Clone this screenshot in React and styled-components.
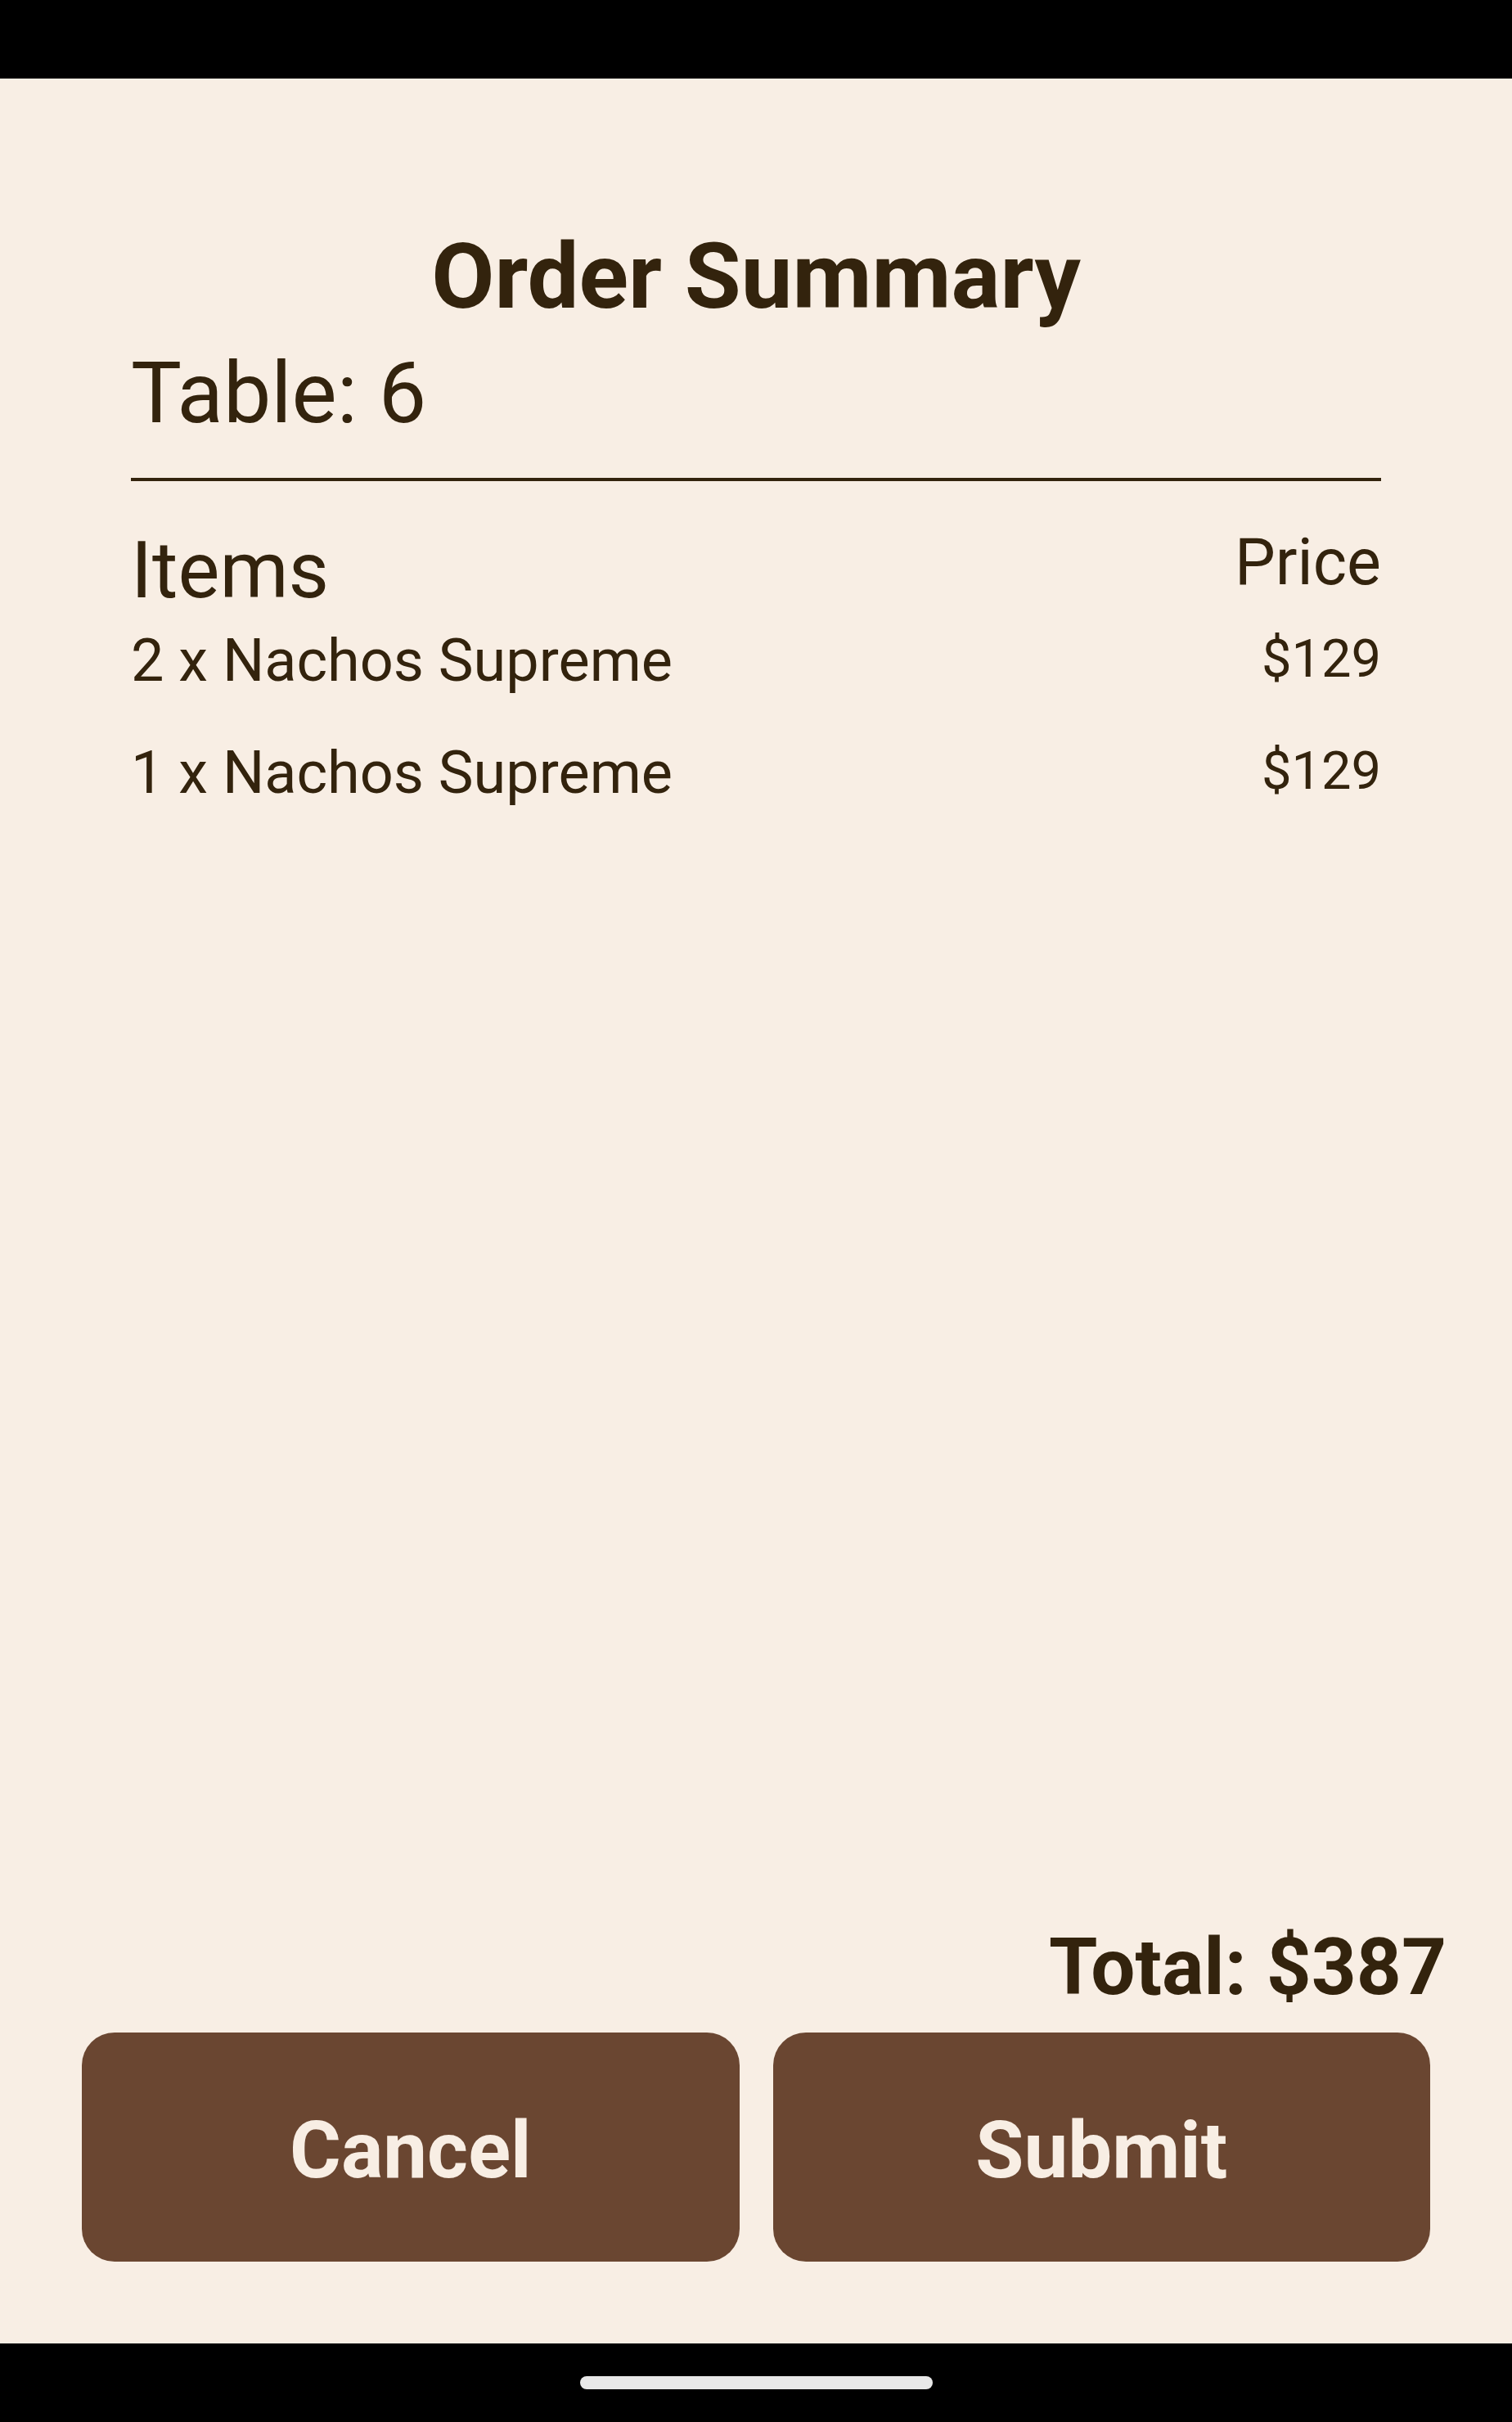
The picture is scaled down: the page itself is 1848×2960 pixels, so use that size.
import React from 'react'
import styled, { createGlobalStyle } from 'styled-components'

const BACKGROUND_COLOR = '#F8EEE4'
const TEXT_COLOR = '#33230D'
const BUTTON_COLOR = '#6A4631'

const GlobalStyle = createGlobalStyle`
  html, body {
    margin: 0;
    padding: 0;
    background: #000;
  }
  body {
    font-family: Roboto, "Noto Sans", sans-serif;
  }
`

const Screen = styled.div`
  display: flex;
  flex-direction: column;
  height: 2960px;
  width: 1848px;
`

const StatusBar = styled.div`
  background: #000;
  height: 96px;
`

const Content = styled.main`
  background: ${BACKGROUND_COLOR};
  color: ${TEXT_COLOR};
  display: flex;
  flex: 1;
  flex-direction: column;
  padding: 176px 0 100px;
`

const Title = styled.h1`
  font-size: 112px;
  font-weight: 700;
  margin: 0;
  text-align: center;
`

const Section = styled.section`
  display: flex;
  flex-direction: column;
  padding: 0 160px;
`

const TableLabel = styled.p`
  font-size: 104px;
  margin: 17px 0 0;
`

const Divider = styled.hr`
  background: ${TEXT_COLOR};
  border: none;
  height: 4px;
  margin: 43px 0 0;
`

const HeaderRow = styled.div`
  align-items: flex-start;
  display: flex;
  justify-content: space-between;
  margin-top: 53px;
`

const HeaderCell = styled.span`
  font-size: ${props => props.size}px;
`

const ItemList = styled.ul`
  display: flex;
  flex-direction: column;
  gap: 52px;
  list-style: none;
  margin: 12px 0 0;
  padding: 0;
`

const ItemRow = styled.li`
  align-items: flex-start;
  display: flex;
  justify-content: space-between;
`

const ItemName = styled.span`
  font-size: 72px;
`

const ItemPrice = styled.span`
  font-size: 65px;
  padding-top: 2px;
`

const Spacer = styled.div`
  flex: 1;
`

const Total = styled.p`
  font-size: 96px;
  font-weight: 700;
  margin: 0;
  padding-right: 80px;
  text-align: right;
`

const ButtonRow = styled.div`
  display: grid;
  gap: 41px;
  grid-template-columns: 1fr 1fr;
  margin-top: 24px;
  padding: 0 100px;
`

const ActionButton = styled.button`
  background: ${BUTTON_COLOR};
  border: none;
  border-radius: 40px;
  color: ${BACKGROUND_COLOR};
  font-family: Roboto, "Noto Sans", sans-serif;
  font-size: 96px;
  font-weight: 700;
  height: 280px;
  padding: 8px 0 0;
`

const NavBar = styled.div`
  background: #000;
  box-sizing: border-box;
  display: flex;
  height: 96px;
  justify-content: center;
  padding-top: 40px;
`

const HomeIndicator = styled.div`
  background: #E8E8E8;
  border-radius: 8px;
  height: 16px;
  width: 431px;
`

const items = [
  { name: '2 x Nachos Supreme', price: '$129' },
  { name: '1 x Nachos Supreme', price: '$129' },
]

const App = () => {
  return (
    <Screen>
      <GlobalStyle />
      <StatusBar />
      <Content>
        <Title>Order Summary</Title>
        <Section>
          <TableLabel>Table: 6</TableLabel>
          <Divider />
          <HeaderRow>
            <HeaderCell size={96}>Items</HeaderCell>
            <HeaderCell size={79}>Price</HeaderCell>
          </HeaderRow>
          <ItemList>
            {items.map((item, i) => (
              <ItemRow key={i}>
                <ItemName>{item.name}</ItemName>
                <ItemPrice>{item.price}</ItemPrice>
              </ItemRow>
            ))}
          </ItemList>
        </Section>
        <Spacer />
        <Total>Total: $387</Total>
        <ButtonRow>
          <ActionButton>Cancel</ActionButton>
          <ActionButton>Submit</ActionButton>
        </ButtonRow>
      </Content>
      <NavBar>
        <HomeIndicator />
      </NavBar>
    </Screen>
  )
}

export default App
